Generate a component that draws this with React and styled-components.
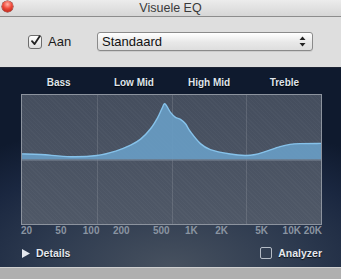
import React from "react";
import styled, { createGlobalStyle } from "styled-components";

const GlobalStyle = createGlobalStyle`
  html, body {
    margin: 0;
    padding: 0;
    background: #b0b0b0;
  }
  body {
    font-family: "Liberation Sans", Arial, sans-serif;
  }
`;

//DATA
const bands = ["Bass", "Low Mid", "High Mid", "Treble"];
const freqs = [
  { label: "20", f: 20 },
  { label: "50", f: 50 },
  { label: "100", f: 100 },
  { label: "200", f: 200 },
  { label: "500", f: 500 },
  { label: "1K", f: 1000 },
  { label: "2K", f: 2000 },
  { label: "5K", f: 5000 },
  { label: "10K", f: 10000 },
  { label: "20K", f: 20000 },
];
const curve = [
  [0, 59.3], [19, 60], [49, 62.2], [75, 61], [94, 56.5], [109, 50.5],
  [119, 44.5], [129, 34], [136, 23], [140.5, 13.5], [143.5, 9], [149, 17.5],
  [154, 22.5], [159, 24.5], [164, 29], [169, 37], [179, 49], [189, 55],
  [209, 59.5], [224, 61], [234, 60], [244, 57], [259, 52], [269, 49.8],
  [279, 49], [300, 48.8],
];

//catmull-rom -> bezier
const smoothPath = (pts) => {
  let d = `M${pts[0][0]},${pts[0][1]}`;
  for (let i = 0; i < pts.length - 1; i++) {
    const p0 = pts[i - 1] || pts[i];
    const p1 = pts[i];
    const p2 = pts[i + 1];
    const p3 = pts[i + 2] || p2;
    const c1x = p1[0] + (p2[0] - p0[0]) / 6;
    const c1y = p1[1] + (p2[1] - p0[1]) / 6;
    const c2x = p2[0] - (p3[0] - p1[0]) / 6;
    const c2y = p2[1] - (p3[1] - p1[1]) / 6;
    d += ` C${c1x.toFixed(2)},${c1y.toFixed(2)} ${c2x.toFixed(2)},${c2y.toFixed(2)} ${p2[0]},${p2[1]}`;
  }
  return d;
};

const freqX = (f) => (Math.log10(f / 20) / 3) * 100;

const App = () => {
  const line = smoothPath(curve);
  const area = `${line} L300,65 L0,65 Z`;
  return (
    <>
      <GlobalStyle />
      <Window>
        <TitleBar>
          <CloseDot />
          <Title>Visuele EQ</Title>
        </TitleBar>
        <Toolbar>
          <CheckLabel>
            <CheckBox>
              <svg width="12" height="12" viewBox="0 0 12 12">
                <path
                  d="M2.2 6.2 L5 9.4 L10.6 0.8"
                  fill="none"
                  stroke="#222"
                  strokeWidth="2"
                  strokeLinecap="round"
                  strokeLinejoin="round"
                />
              </svg>
            </CheckBox>
            Aan
          </CheckLabel>
          <Popup>
            Standaard
            <svg width="7" height="11" viewBox="0 0 7 11">
              <path d="M3.5 0.5 L6.5 4 L0.5 4 Z" fill="#222" />
              <path d="M3.5 10.5 L6.5 7 L0.5 7 Z" fill="#222" />
            </svg>
          </Popup>
        </Toolbar>
        <Panel>
          <BandRow>
            {bands.map((b) => (
              <BandLabel key={b}>{b}</BandLabel>
            ))}
          </BandRow>
          <Graph>
            <GridCols>
              {bands.map((b) => (
                <GridCol key={b} />
              ))}
            </GridCols>
            <Plot viewBox="0 0 300 130" preserveAspectRatio="none">
              <path d={area} fill="#689cc3" fillOpacity="0.92" />
              <path d={line} fill="none" stroke="#86c2ea" strokeWidth="1.4" />
              <line x1="0" y1="65.5" x2="300" y2="65.5" stroke="#7d8897" strokeWidth="1.2" />
            </Plot>
          </Graph>
          <FreqRow>
            {freqs.map((fr, i) => (
              <FreqLabel
                key={fr.label}
                $edge={i === 0 ? "start" : i === freqs.length - 1 ? "end" : "mid"}
                style={{ left: `${freqX(fr.f)}%` }}
              >
                {fr.label}
              </FreqLabel>
            ))}
          </FreqRow>
          <Footer>
            <Disclosure>
              <svg width="8" height="9" viewBox="0 0 8 9">
                <path d="M0 0 L8 4.5 L0 9 Z" fill="#e4e8ee" />
              </svg>
              Details
            </Disclosure>
            <Disclosure>
              <SmallBox />
              Analyzer
            </Disclosure>
          </Footer>
        </Panel>
        <BottomBar />
      </Window>
    </>
  );
};

const Window = styled.div`
  width: 341px;
  height: 279px;
  display: flex;
  flex-direction: column;
  background: #dedede;
  overflow: hidden;
`;

const TitleBar = styled.div`
  position: relative;
  height: 16px;
  display: flex;
  align-items: center;
  justify-content: center;
  background: linear-gradient(#ececec, #d6d6d6);
  border-bottom: 1px solid #8c8c8c;
`;

const CloseDot = styled.div`
  position: absolute;
  left: 2px;
  top: 1px;
  width: 11px;
  height: 11px;
  border-radius: 50%;
  background: radial-gradient(circle at 50% 30%, #ffb4a8 0%, #f04a3a 45%, #a51a10 100%);
  box-shadow: 0 0 0 0.5px #7a1a12;
`;

const Title = styled.div`
  font-size: 12.5px;
  color: #3a3a3a;
  line-height: 16px;
`;

const Toolbar = styled.div`
  height: 51px;
  display: flex;
  align-items: center;
  padding-left: 28px;
  padding-bottom: 1px;
  box-sizing: border-box;
  background: #dedede;
  border-bottom: 1px solid #1c2333;
`;

const CheckLabel = styled.label`
  display: flex;
  align-items: center;
  gap: 6px;
  font-size: 13px;
  color: #1a1a1a;
  width: 69px;
`;

const CheckBox = styled.span`
  width: 14px;
  height: 14px;
  box-sizing: border-box;
  border: 1px solid #6d6d6d;
  border-radius: 3px;
  background: linear-gradient(#ffffff, #dcdcdc);
  display: flex;
  align-items: center;
  justify-content: center;
  svg {
    margin-top: -2px;
    margin-left: 1px;
  }
`;

const Popup = styled.div`
  width: 216px;
  height: 19px;
  box-sizing: border-box;
  border: 1px solid #8a8a8a;
  border-radius: 3px;
  background: linear-gradient(#ffffff, #e8e8e8 55%, #dedede);
  box-shadow: 0 1px 0 rgba(0, 0, 0, 0.08);
  display: flex;
  align-items: center;
  justify-content: space-between;
  padding: 0 6px 0 4px;
  font-size: 13px;
  color: #111;
`;

const Panel = styled.div`
  flex: 1;
  display: flex;
  flex-direction: column;
  padding: 8px 19px 0 21px;
  background:
    radial-gradient(ellipse 85% 75% at 50% 100%, #47515f 0%, #2d3a4f 45%, #1a2740 75%, #0f1a2e 100%);
`;

const BandRow = styled.div`
  display: grid;
  grid-template-columns: repeat(4, 1fr);
  width: 301px;
  margin-bottom: 5px;
`;

const BandLabel = styled.div`
  text-align: center;
  font-size: 10px;
  font-weight: bold;
  line-height: 13px;
  color: #dfe4eb;
  text-shadow: 0 1px 1px rgba(0, 0, 0, 0.9);
`;

const Graph = styled.div`
  position: relative;
  width: 301px;
  height: 131px;
  box-sizing: border-box;
  border: 1px solid #8c939e;
  background:
    repeating-linear-gradient(45deg, rgba(255, 255, 255, 0.025) 0 1px, transparent 1px 3px),
    linear-gradient(#454e5e, #4f5867);
`;

const GridCols = styled.div`
  position: absolute;
  inset: 0;
  display: grid;
  grid-template-columns: repeat(4, 1fr);
`;

const GridCol = styled.div`
  border-left: 1px solid rgba(255, 255, 255, 0.12);
  &:first-child {
    border-left: none;
  }
`;

const Plot = styled.svg`
  position: absolute;
  inset: 0;
  width: 100%;
  height: 100%;
`;

const FreqRow = styled.div`
  position: relative;
  width: 301px;
  height: 12px;
`;

const FreqLabel = styled.span`
  position: absolute;
  top: 0;
  font-size: 10px;
  font-weight: bold;
  line-height: 12px;
  color: #8a94a1;
  transform: ${(p) =>
    p.$edge === "start" ? "none" : p.$edge === "end" ? "translateX(-100%)" : "translateX(-50%)"};
`;

const Footer = styled.div`
  width: 301px;
  margin-top: 9px;
  display: flex;
  justify-content: space-between;
  align-items: center;
  height: 14px;
`;

const Disclosure = styled.div`
  display: flex;
  align-items: center;
  gap: 6px;
  font-size: 10.5px;
  font-weight: bold;
  color: #e4e8ee;
  text-shadow: 0 1px 1px rgba(0, 0, 0, 0.8);
  svg {
    margin-left: 1px;
  }
`;

const SmallBox = styled.span`
  width: 12px;
  height: 12px;
  box-sizing: border-box;
  border: 1px solid #b5bcc6;
  border-radius: 2px;
  margin-right: 0;
`;

const BottomBar = styled.div`
  height: 11px;
  background: #afafaf;
  border-top: 1px solid #d0d0d0;
`;

export default App;
